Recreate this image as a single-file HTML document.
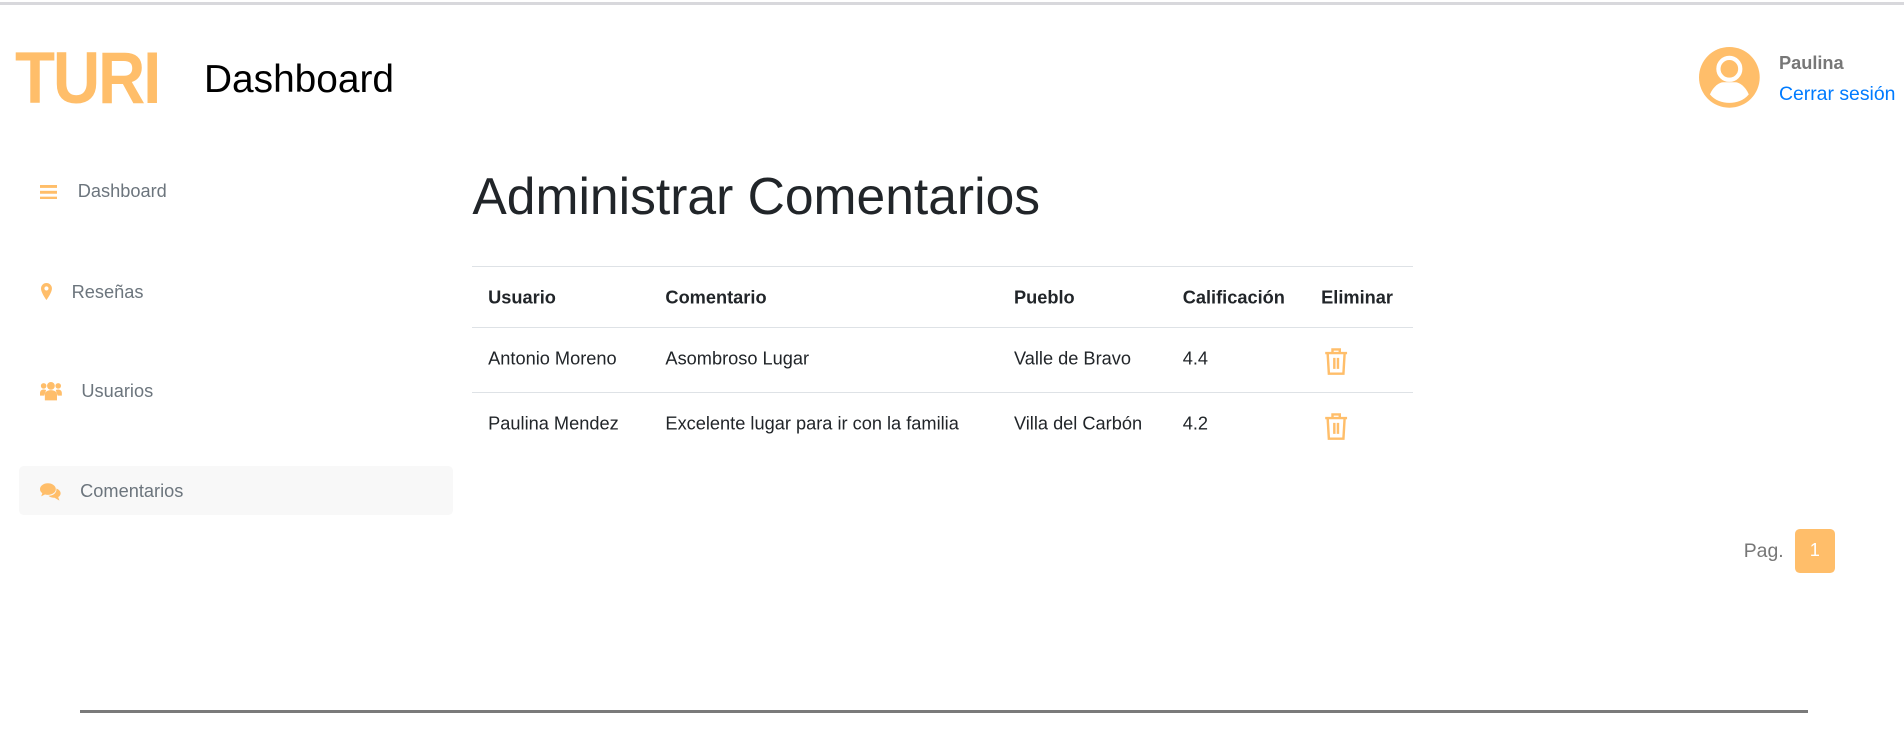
<!DOCTYPE html>
<html><head><meta charset="utf-8"><style>
html{zoom:1.2143}
body{margin:0;width:1568px;height:604px;position:relative;background:#fff;font-family:"Liberation Sans",sans-serif;overflow:hidden}
.a{position:absolute;white-space:nowrap}
.o{color:#ffbe6a}
.side{font-size:15px;color:#6c757d}
.row{position:absolute;left:389px;width:775px;border-top:1px solid #dee2e6}
.c{position:absolute;font-size:15px;color:#212529;transform:translateY(-50%)}
.h{font-weight:bold}
</style></head><body>
<div class="a" style="left:0;top:2px;width:1568px;height:2px;background:#d8d8dc"></div>
<div class="a o" style="left:12px;top:30px;font-size:60px;font-weight:bold;letter-spacing:-2px;line-height:70px;transform:scaleX(0.9);transform-origin:0 0">TURI</div>
<div class="a" style="left:168px;top:46px;font-size:32px;line-height:40px;color:#000">Dashboard</div>
<svg class="a" style="left:1399px;top:39px" width="50" height="50" viewBox="0 0 50 50"><circle cx="25" cy="25" r="25" fill="#ffbe6a"/><circle cx="25" cy="18" r="9" fill="none" stroke="#fff" stroke-width="3.5"/><path d="M9 39c3-7 8-10 11-10h10c3 0 8 3 11 10c-4 5-10 7-16 7s-12-2-16-7z" fill="#fff"/></svg>
<div class="a" style="left:1465px;top:44px;font-size:15px;font-weight:bold;color:#777">Paulina</div>
<div class="a" style="left:1465px;top:68px;font-size:16px;color:#007bff">Cerrar sesión</div>

<svg class="a" style="left:33px;top:152px" width="14" height="12"><rect y="0" width="14" height="2.4" fill="#ffbe6a"/><rect y="4.8" width="14" height="2.4" fill="#ffbe6a"/><rect y="9.6" width="14" height="2.4" fill="#ffbe6a"/></svg>
<div class="a side" style="left:64px;top:149px">Dashboard</div>
<svg class="a" style="left:34px;top:233px" width="9" height="14" viewBox="0 0 9 14"><path d="M4.5 0A4.5 4.5 0 0 0 0 4.5C0 8 4.5 14 4.5 14S9 8 9 4.5A4.5 4.5 0 0 0 4.5 0z" fill="#ffbe6a"/><circle cx="4.5" cy="4.5" r="1.7" fill="#fff"/></svg>
<div class="a side" style="left:59px;top:232px">Reseñas</div>
<svg class="a" style="left:33px;top:314px" width="18" height="16" viewBox="0 0 18 16"><circle cx="9" cy="4" r="3.2" fill="#ffbe6a"/><circle cx="3" cy="4" r="2.3" fill="#ffbe6a"/><circle cx="15" cy="4" r="2.3" fill="#ffbe6a"/><path d="M4 16v-5c0-2 2-3.5 5-3.5s5 1.5 5 3.5v5z" fill="#ffbe6a"/><path d="M0 12v-2c0-2 1.5-3 3-3s2 .5 2 .5L3.5 12z" fill="#ffbe6a"/><path d="M18 12v-2c0-2-1.5-3-3-3s-2 .5-2 .5L14.5 12z" fill="#ffbe6a"/></svg>
<div class="a side" style="left:67px;top:314px">Usuarios</div>
<div class="a" style="left:16px;top:384px;width:357px;height:40px;background:#f8f8f8;border-radius:4px"></div>
<svg class="a" style="left:33px;top:398px" width="17" height="15" viewBox="0 0 17 15"><ellipse cx="6.5" cy="5" rx="6.5" ry="4.8" fill="#ffbe6a"/><path d="M2 8l-1 3 4-2z" fill="#ffbe6a"/><path d="M13.5 4.5C16 5.5 17 7 17 8.5c0 1.5-1 2.5-2 3l1 3-4-2.3c-2 0-4-.6-5-1.7 4 0 7-2.5 6.5-6z" fill="#ffbe6a"/></svg>
<div class="a side" style="left:66px;top:396px">Comentarios</div>

<div class="a" style="left:389px;top:137px;font-size:42.5px;font-weight:500;color:#212529;line-height:50px">Administrar Comentarios</div>
<div class="row" style="top:219px"></div>
<div class="row" style="top:269px"></div>
<div class="row" style="top:323px"></div>
<div class="c h" style="left:402px;top:245px">Usuario</div>
<div class="c h" style="left:548px;top:245px">Comentario</div>
<div class="c h" style="left:835px;top:245px">Pueblo</div>
<div class="c h" style="left:974px;top:245px">Calificación</div>
<div class="c h" style="left:1088px;top:245px">Eliminar</div>
<div class="c" style="left:402px;top:296px">Antonio Moreno</div>
<div class="c" style="left:548px;top:296px">Asombroso Lugar</div>
<div class="c" style="left:835px;top:296px">Valle de Bravo</div>
<div class="c" style="left:974px;top:296px">4.4</div>
<div class="c" style="left:402px;top:349px">Paulina Mendez</div>
<div class="c" style="left:548px;top:349px">Excelente lugar para ir con la familia</div>
<div class="c" style="left:835px;top:349px">Villa del Carbón</div>
<div class="c" style="left:974px;top:349px">4.2</div>
<svg class="a" style="left:1090px;top:286px" width="20" height="23" viewBox="0 0 20 23"><g fill="none" stroke="#ffbe6a" stroke-width="2"><path d="M1 5h18M7 5V2h6v3M3 5l1 17h12l1-17M8.5 9v9M11.5 9v9"/></g></svg>
<svg class="a" style="left:1090px;top:339px" width="20" height="23" viewBox="0 0 20 23"><g fill="none" stroke="#ffbe6a" stroke-width="2"><path d="M1 5h18M7 5V2h6v3M3 5l1 17h12l1-17M8.5 9v9M11.5 9v9"/></g></svg>

<div class="a" style="left:1436px;top:445px;font-size:16px;color:#777">Pag.</div>
<div class="a" style="left:1478px;top:436px;width:33px;height:36px;background:#ffbe6a;border-radius:4px;color:#fff;font-size:15px;text-align:center;line-height:36px">1</div>
<div class="a" style="left:66px;top:585px;width:1423px;height:2px;background:#7a7a7a"></div>
</body></html>
